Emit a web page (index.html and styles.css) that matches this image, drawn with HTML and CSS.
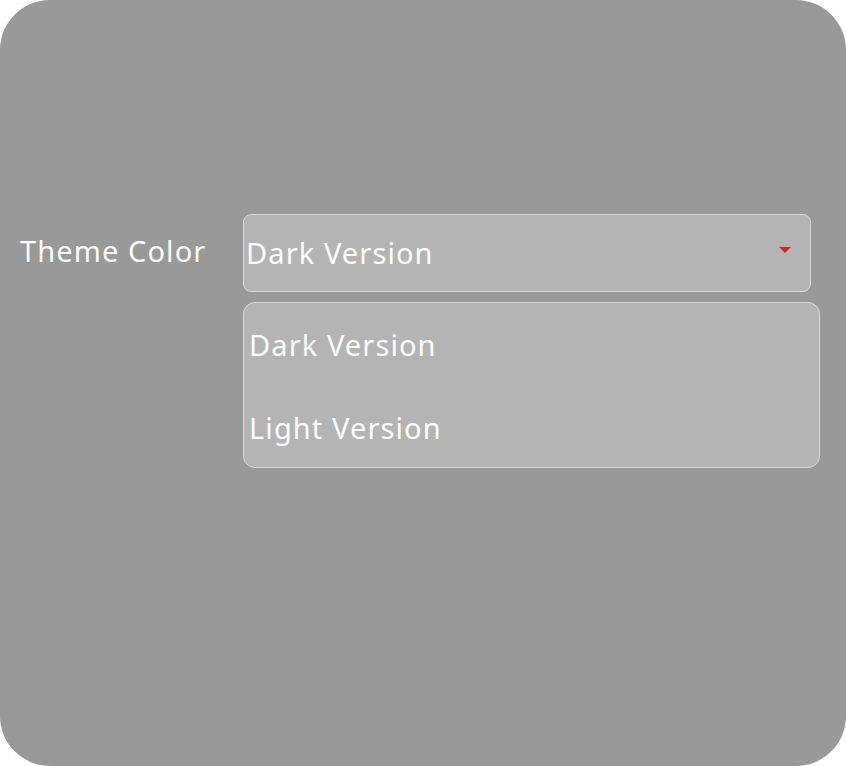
FILE: index.html
```html
<!DOCTYPE html>
<html>
<head>
<meta charset="utf-8">
<link rel="stylesheet" href="styles.css">
</head>
<body>
<div class="window">
  <div class="row">
    <div class="label">Theme Color</div>
    <div class="combo-wrap">
      <div class="combo">
        <span class="combo-text">Dark Version</span>
        <span class="arrow"></span>
      </div>
      <div class="popup">
        <div class="item">Dark Version</div>
        <div class="item">Light Version</div>
      </div>
    </div>
  </div>
</div>
</body>
</html>
```
FILE: styles.css
```css
html, body {
  margin: 0;
  padding: 0;
  background: #ffffff;
}
.window {
  width: 846px;
  height: 766px;
  background: #999999;
  border-radius: 50px;
  box-sizing: border-box;
  padding-top: 214px;
  font-family: "Noto Sans", "Open Sans", sans-serif;
  color: #fbfbfb;
  letter-spacing: 1.1px;
}
.row {
  display: flex;
  align-items: flex-start;
}
.label {
  width: 243px;
  padding-left: 20px;
  box-sizing: border-box;
  font-size: 29px;
  line-height: 78px;
  margin-top: -2px;
}
.combo-wrap {
  position: relative;
}
.combo {
  width: 568px;
  height: 78px;
  box-sizing: border-box;
  background: #b4b4b4;
  border: 1px solid #dadada;
  border-radius: 8px;
  display: flex;
  align-items: center;
  padding-left: 2px;
  font-size: 29px;
}
.combo-text {
  flex: 1;
  margin-top: -2px;
}
.arrow {
  width: 0;
  height: 0;
  border-left: 6px solid transparent;
  border-right: 6px solid transparent;
  border-top: 6px solid #d02a1a;
  margin-right: 19px;
  margin-top: -6px;
}
.popup {
  position: absolute;
  left: 0;
  top: 88px;
  width: 577px;
  height: 166px;
  box-sizing: border-box;
  background: #b4b4b4;
  border: 1px solid #dadada;
  border-radius: 12px;
  font-size: 29px;
}
.item {
  height: 83px;
  line-height: 83px;
  padding-left: 5px;
}
```
